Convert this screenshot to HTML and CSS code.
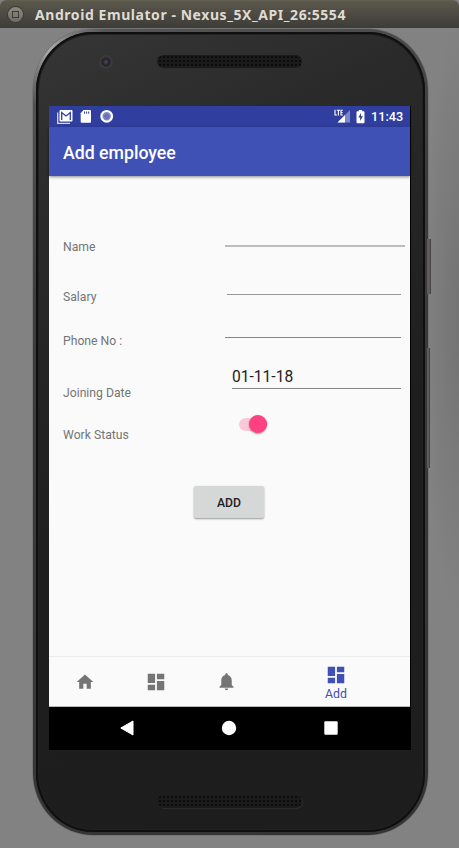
FILE: index.html
```html
<!DOCTYPE html>
<html lang="en">
<head>
<meta charset="utf-8">
<title>Android Emulator</title>
<link rel="stylesheet" href="styles.css">
</head>
<body>
<header class="titlebar">
  <span class="window-button"><span></span></span>
  <span class="window-title">Android Emulator - Nexus_5X_API_26:5554</span>
</header>
<main class="desktop">
  <div class="phone">
    <div class="bezel bezel-top"><i class="camera"></i><i class="speaker"></i></div>
    <div class="screen">
      <div class="statusbar">
        <svg class="notifications" width="60" height="16" viewBox="0 0 60 16">
          <path d="M.7 3.5V14.3H13" fill="none" stroke="#d5d8ef" stroke-width="1.3"/>
          <rect x="2.5" y="1" width="13" height="11.5" rx="1" fill="#fff"/>
          <path d="M4.7 11V3.5L9 7l4.3-3.5V11" fill="none" stroke="#303f9f" stroke-width="1.3"/>
          <path d="M26.5 1H33a1 1 0 0 1 1 1v10.7a1 1 0 0 1-1 1h-8.3a1 1 0 0 1-1-1V4.3z" fill="#fff"/>
          <path d="M27.5 2.500v2.2M29.6 2.500v2.2M31.7 2.500v2.2" stroke="#303f9f" stroke-width="1"/>
          <circle cx="49.7" cy="7.3" r="5.3" fill="#7f89c5" stroke="#fff" stroke-width="2.2"/>
          <circle cx="49.7" cy="7.3" r="2.6" fill="#6873bb"/>
        </svg>
        <svg class="signal" width="17" height="16" viewBox="0 0 17 16">
          <path d="M16 1v12.500H3.500z" fill="#7d87c6"/>
          <path d="M11 6v7.500H3.500z" fill="#fff"/>
          <path d="M1 .7v5.300h2M2.800 1.200h3.200M4.400 1.200v5.200M8.800 1.200H7v4.800h1.800M7 3.500h1.600" fill="none" stroke="#fff" stroke-width="1.100"/>
        </svg>
        <svg class="battery" width="9" height="14" viewBox="0 0 9 14">
          <path d="M2.8 0h3.4v1.3h1.3q1 0 1 1v9.900q0 1-1 1h-6q-1 0-1-1V2.300q0-1 1-1h1.300z" fill="#fff"/>
          <path d="M5 3 2.300 7.500h1.800v3.500l2.800-4.700H5z" fill="#303f9f"/>
        </svg>
        <span class="clock">11:43</span>
      </div>
      <div class="appbar">Add employee</div>
      <form class="form">
        <div class="row row-name"><label>Name</label><div class="field"></div></div>
        <div class="row row-salary"><label>Salary</label><div class="field"></div></div>
        <div class="row row-phone"><label>Phone No :</label><div class="field"></div></div>
        <div class="row row-date"><label>Joining Date</label><div class="field">01-11-18</div></div>
        <div class="row row-status"><label>Work Status</label><div class="switch"><i></i></div></div>
        <button class="add-button" type="button">ADD</button>
      </form>
      <nav class="tabs">
        <a class="tab"><svg width="20" height="20" viewBox="0 0 24 24"><path d="M10 20v-6h4v6h5v-8h3L12 3 2 12h3v8z"/></svg></a>
        <a class="tab"><svg width="22" height="22" viewBox="0 0 24 24"><path d="M3 13h8V3H3zm0 8h8v-6H3zm10 0h8V11h-8zm0-18v6h8V3z"/></svg></a>
        <a class="tab"><svg width="21" height="21" viewBox="0 0 24 24"><path d="M12 22c1.100 0 2-.9 2-2h-4c0 1.100.9 2 2 2zm6-6v-5c0-3.070-1.640-5.640-4.500-6.320V4c0-.83-.67-1.500-1.500-1.500s-1.500.67-1.500 1.500v.68C7.630 5.360 6 7.920 6 11v5l-2 2v1h16v-1z"/></svg></a>
        <a class="tab active"><svg width="22" height="22" viewBox="0 0 24 24"><path d="M3 13h8V3H3zm0 8h8v-6H3zm10 0h8V11h-8zm0-18v6h8V3z"/></svg><span>Add</span></a>
      </nav>
      <div class="softkeys">
        <svg width="14" height="16" viewBox="0 0 14 16"><path d="M13 1v14L.8 8z" fill="#fff" stroke="#fff" stroke-linejoin="round"/></svg>
        <svg width="16" height="16" viewBox="0 0 16 16"><circle cx="8" cy="8" r="7.200" fill="#fff"/></svg>
        <svg width="14" height="14" viewBox="0 0 14 14"><rect x=".3" y=".3" width="13.400" height="13.400" rx="1" fill="#fff"/></svg>
      </div>
    </div>
    <div class="bezel bezel-bottom"><i class="speaker"></i></div>
    <i class="side-key power"></i>
    <i class="side-key volume"></i>
  </div>
</main>
</body>
</html>
```
FILE: styles.css
```css
* { box-sizing: border-box; }
body { margin: 0; width: 459px; height: 848px; overflow: hidden; background: #828282; font-family: Roboto, sans-serif; }
i { display: block; }
svg { display: block; flex: none; }

.titlebar { display: flex; align-items: center; height: 28px; padding: 1px 0 0 8px; background: linear-gradient(#64624f 0, #5a574c 2px, #3e3d38 27px); border-radius: 6px 6px 0 0; }
.window-button { display: grid; place-items: center; width: 15px; height: 15px; border-radius: 50%; background: linear-gradient(#8b897f, #6e6c64); box-shadow: 0 0 0 1px #3b3a34; }
.window-button span { width: 7px; height: 7px; border: 1px solid #3b3a34; }
.window-title { margin-left: 12px; font: bold 14px/20px "Noto Sans", sans-serif; letter-spacing: .56px; color: #dfdbd2; white-space: nowrap; }

.desktop { height: 820px; padding: 1px 0 0 33px; background: radial-gradient(ellipse 36px 300px at 459px 290px, #737373, #828282); }
.phone {
  position: relative;
  display: flex;
  flex-direction: column;
  width: 395px;
  height: 806px;
  border: 3px solid transparent;
  border-radius: 60px / 62px;
  background:
    linear-gradient(155deg, #363636 0, #2a2a2a 20%, #1e1e1e 55%, #1d1d1d 100%) padding-box,
    radial-gradient(circle at 14px 18px, #b0b0b0 0, #808080 22px, transparent 60px) border-box,
    linear-gradient(160deg, #585858 0, #3c3c3c 30%, #333 100%) border-box;
  box-shadow: inset 0 0 0 2px #0f0f0f, inset 0 0 0 3px #222, 0 0 0 .5px #666;
}
.bezel { display: flex; position: relative; }
.bezel-top { flex: none; height: 74px; padding: 23px 0 0 63px; }
.bezel-bottom { padding: 45px 0 0 121px; }
.camera { width: 14px; height: 14px; border-radius: 50%; background: radial-gradient(circle, #55475a 0, #29242f 3px, #23222a 4px, #3b3b3b 5px, #383838 7px); }
.speaker { width: 145px; height: 13px; border-radius: 7px; background-color: #1b1b1b; background-image: radial-gradient(circle, #0b0b0b 0.7px, transparent 1.3px); background-size: 4px 4px; background-position: 1px 0; box-shadow: 1px 1px 0 #2b2b2b; }
.bezel-top .speaker { margin-left: 44px; }
.side-key { position: absolute; left: 391px; width: 4px; background: #484445; border-left: 3px solid #5e5b5b; }
.power { top: 207px; height: 55px; }
.volume { top: 316px; height: 120px; width: 3px; border-left-width: 2px; }

.screen { display: flex; flex: none; flex-direction: column; width: 362px; height: 644px; margin-left: 13px; border-right: 1px solid #000; background: #fafafa; }
.statusbar { display: flex; flex: none; align-items: flex-start; height: 21px; padding: 3px 7px 0 8px; background: #303f9f; }
.signal { margin-left: 217px; }
.battery { margin: 1px 0 0 5px; }
.clock { margin-left: 6px; color: #fff; font-size: 12.700px; font-weight: 500; line-height: 16px; white-space: nowrap; }
.appbar { flex: none; height: 49px; padding-left: 14px; background: #3f51b5; box-shadow: 0 1px 3px rgba(0,0,0,.45); color: #fff; font-size: 17.700px; font-weight: 500; line-height: 52px; }

.form { display: flex; flex-direction: column; height: 480px; padding: 46px 0 0 14px; }
.row { display: flex; flex: none; align-items: flex-start; }
.row label { width: 162px; color: #757575; font-size: 12.200px; line-height: 16px; }
.field { border-bottom: 1px solid #858585; color: #212121; font-size: 15.600px; line-height: 19px; }
.row-name { height: 49px; }
.row-name label { padding-top: 17px; }
.row-name .field { width: 180px; height: 25px; border-bottom: 2px solid #bdbdbd; }
.row-salary { height: 45px; }
.row-salary label { width: 164px; padding-top: 18px; }
.row-salary .field { width: 174px; height: 24px; border-bottom-color: #999; }
.row-phone { height: 43px; }
.row-phone label { padding-top: 17px; }
.row-phone .field { width: 176px; height: 22px; }
.row-date { height: 55px; }
.row-date label { width: 169px; padding-top: 26px; }
.row-date .field { width: 169px; height: 30px; padding-top: 9px; }
.row-status { height: 41px; }
.row-status label { width: 175px; padding-top: 13px; }
.switch { display: flex; align-items: center; justify-content: flex-end; width: 28px; height: 13px; margin: 3.500px 0 0 .5px; border-radius: 7px; background: #fac8d9; }
.switch i { flex: none; width: 18px; height: 18px; border-radius: 50%; background: #ff4081; box-shadow: 0 1px 2px rgba(0,0,0,.4); }
.add-button { width: 70px; height: 32px; margin: 31px 0 0 131px; padding: 1px 0 0; border: 0; border-radius: 2px; background: #d6d7d7; box-shadow: 0 1px 2px rgba(0,0,0,.4); color: #212121; font: 500 12.200px/32px Roboto, sans-serif; }

.tabs { display: grid; flex: none; grid-template-columns: 71px 71px 71px 148px; height: 51px; border-top: 1px solid #ededed; border-bottom: 1px solid #b8b8b8; background: #fafafa; }
.tab { display: flex; flex-direction: column; align-items: center; justify-content: center; fill: #757575; }
.tab.active { justify-content: flex-start; padding-top: 7px; fill: #3f51b5; color: #3f51b5; font-size: 12.300px; line-height: 16px; }
.softkeys { display: flex; flex: none; align-items: center; justify-content: space-between; width: 362px; height: 43px; padding: 0 73px 2px 71px; background: #000; }
```
